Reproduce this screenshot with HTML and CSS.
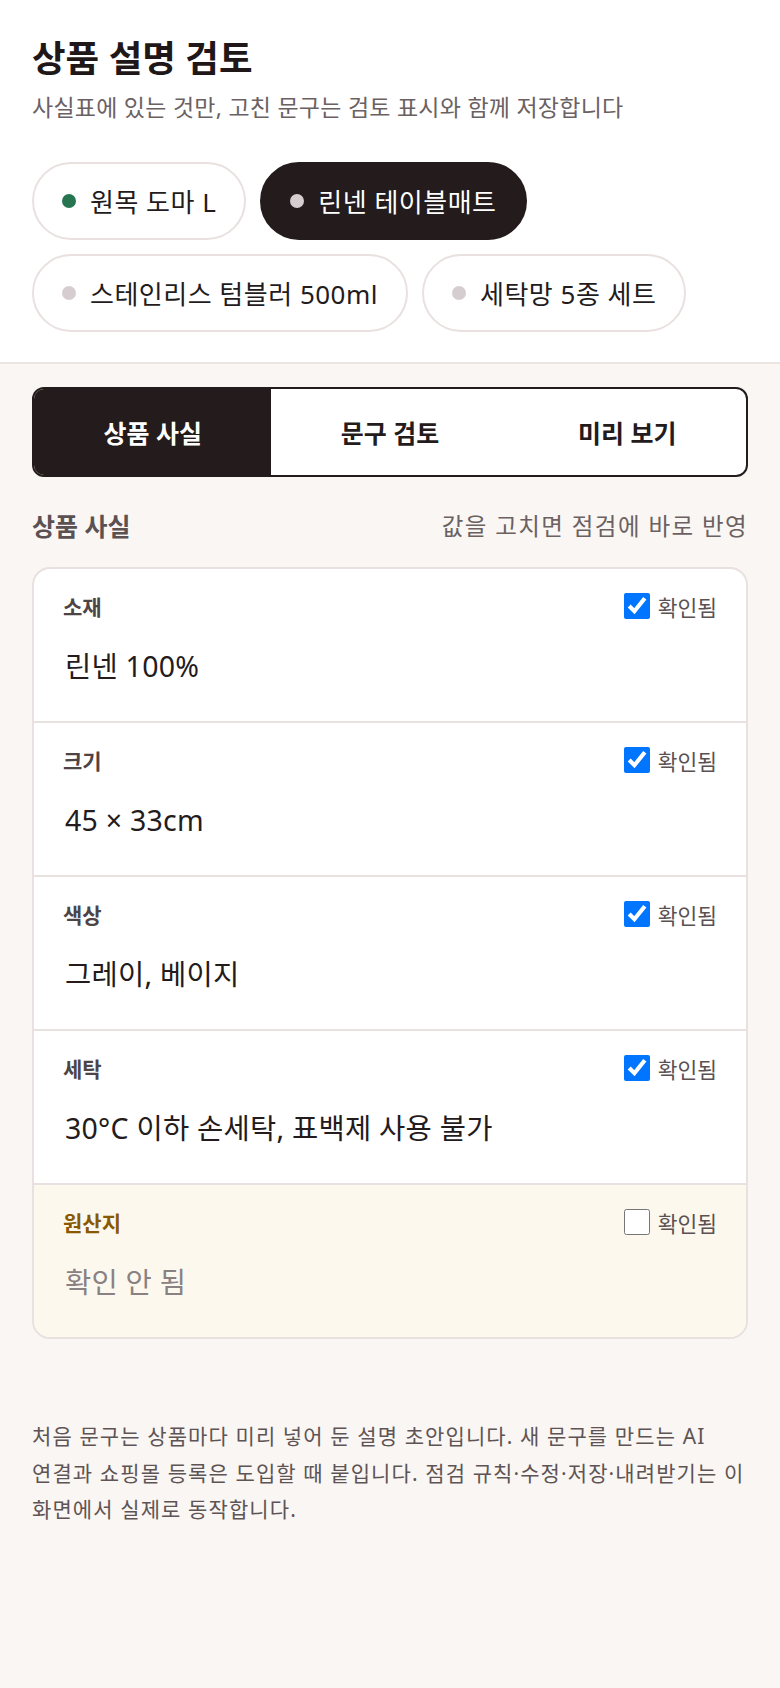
FILE: index.html
```html
<!DOCTYPE html>
<html lang="ko">
<head>
<meta charset="utf-8">
<title>상품 설명 검토</title>
<link rel="stylesheet" href="styles.css">
</head>
<body>
<header class="top">
  <h1 class="title">상품 설명 검토</h1>
  <p class="subtitle">사실표에 있는 것만, 고친 문구는 검토 표시와 함께 저장합니다</p>
  <div class="pills">
    <button class="pill"><span class="dot dot-green"></span>원목 도마 L</button>
    <button class="pill pill-active"><span class="dot"></span>린넨 테이블매트</button>
    <button class="pill"><span class="dot"></span>스테인리스 텀블러 500ml</button>
    <button class="pill"><span class="dot"></span>세탁망 5종 세트</button>
  </div>
</header>
<main class="main">
  <div class="tabs">
    <div class="tab tab-active">상품 사실</div>
    <div class="tab">문구 검토</div>
    <div class="tab">미리 보기</div>
  </div>
  <div class="section-head">
    <span class="section-title">상품 사실</span>
    <span class="section-note">값을 고치면 점검에 바로 반영</span>
  </div>
  <div class="card">
    <div class="row">
      <div class="row-head"><span class="row-label">소재</span><label class="check"><input type="checkbox" checked>확인됨</label></div>
      <div class="row-value">린넨 100%</div>
    </div>
    <div class="row">
      <div class="row-head"><span class="row-label">크기</span><label class="check"><input type="checkbox" checked>확인됨</label></div>
      <div class="row-value">45 × 33cm</div>
    </div>
    <div class="row">
      <div class="row-head"><span class="row-label">색상</span><label class="check"><input type="checkbox" checked>확인됨</label></div>
      <div class="row-value">그레이, 베이지</div>
    </div>
    <div class="row">
      <div class="row-head"><span class="row-label">세탁</span><label class="check"><input type="checkbox" checked>확인됨</label></div>
      <div class="row-value">30°C 이하 손세탁, 표백제 사용 불가</div>
    </div>
    <div class="row row-warn">
      <div class="row-head"><span class="row-label">원산지</span><label class="check"><input type="checkbox">확인됨</label></div>
      <div class="row-value row-empty">확인 안 됨</div>
    </div>
  </div>
  <p class="footnote">처음 문구는 상품마다 미리 넣어 둔 설명 초안입니다. 새 문구를 만드는 AI 연결과 쇼핑몰 등록은 도입할 때 붙입니다. 점검 규칙·수정·저장·내려받기는 이 화면에서 실제로 동작합니다.</p>
</main>
</body>
</html>
```

FILE: styles.css
```css
* { box-sizing: border-box; }
html, body {
  margin: 0;
  padding: 0;
}
body {
  font-family: "Noto Sans", "Noto Sans CJK KR", sans-serif;
  color: #231b1c;
  background: #f9f6f3;
  min-height: 1688px;
  word-break: keep-all;
}
.top {
  background: #ffffff;
  padding: 35px 32px 30px;
  border-bottom: 2px solid #ece6e3;
}
.title {
  margin: 0;
  font-size: 36.5px;
  line-height: 46px;
  font-weight: 700;
  color: #1f1718;
}
.subtitle {
  margin: 10px 0 0;
  font-size: 23px;
  letter-spacing: 0.25px;
  line-height: 32px;
  color: #6b6162;
}
.pills {
  margin-top: 39px;
  display: flex;
  flex-wrap: wrap;
  gap: 14px;
}
.pill {
  height: 78px;
  padding: 0 28px;
  display: flex;
  align-items: center;
  gap: 14px;
  border: 2px solid #e8e1df;
  border-radius: 39px;
  background: #ffffff;
  font-family: inherit;
  font-size: 26px;
  letter-spacing: 0.5px;
  color: #231b1c;
}
.pill-active {
  background: #231b1c;
  border-color: #231b1c;
  color: #ffffff;
}
.dot {
  width: 14px;
  height: 14px;
  border-radius: 50%;
  background: #d6cdd0;
  flex: none;
}
.dot-green { background: #277451; }
.main {
  padding: 23px 32px 0;
}
.tabs {
  display: grid;
  grid-template-columns: 1fr 1fr 1fr;
  height: 90px;
  border: 2px solid #231b1c;
  border-radius: 12px;
  background: #ffffff;
  overflow: hidden;
}
.tab {
  display: flex;
  align-items: center;
  justify-content: center;
  font-size: 25px;
  font-weight: 700;
  color: #231b1c;
}
.tab-active {
  background: #231b1c;
  color: #ffffff;
}
.section-head {
  margin-top: 32px;
  display: flex;
  justify-content: space-between;
  align-items: center;
  height: 32px;
}
.section-title {
  font-size: 25px;
  font-weight: 700;
  color: #5b5152;
}
.section-note {
  font-size: 23.5px;
  letter-spacing: 1.4px;
  color: #6b6162;
}
.card {
  margin-top: 26px;
  border: 2px solid #e8e1df;
  border-radius: 18px;
  background: #ffffff;
  overflow: hidden;
}
.row {
  padding: 24px 29px 35px;
  border-bottom: 2px solid #e8e1df;
}
.row:last-child { border-bottom: none; }
.row-warn { background: #fdf8ee; }
.row-head {
  display: flex;
  justify-content: space-between;
  align-items: center;
  height: 26px;
}
.row-label {
  font-size: 21px;
  font-weight: 700;
  color: #4d4445;
}
.row-warn .row-label { color: #8a5800; }
.check {
  display: flex;
  align-items: center;
  gap: 8px;
  font-size: 21.5px;
  color: #5b5152;
}
.check input {
  margin: 0;
  width: 26px;
  height: 26px;
}
.row-value {
  margin-top: 27px;
  padding-left: 2px;
  font-size: 28.5px;
  letter-spacing: 0.25px;
  line-height: 40px;
  color: #231b1c;
}
.row-empty { color: #8a8182; }
.footnote {
  margin: 79px 0 0;
  font-size: 21px;
  letter-spacing: 1.1px;
  line-height: 36.5px;
  color: #5e5455;
}
```
